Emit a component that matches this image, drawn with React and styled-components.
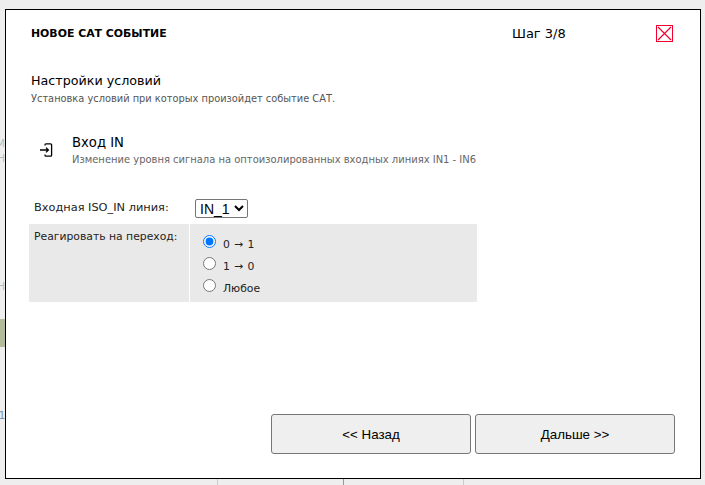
import React from "react";
import styled, { createGlobalStyle } from "styled-components";

const GlobalStyle = createGlobalStyle`
  html, body {
    margin: 0;
    padding: 0;
    background: #eeeeee;
  }
  body {
    font-family: "DejaVu Sans", Verdana, sans-serif;
    color: #000;
  }
`;

const Page = styled.div`
  position: relative;
  width: 705px;
  height: 485px;
  overflow: hidden;
  background: #eeeeee;
  padding: 9px 4px 6px 5px;
  box-sizing: border-box;
`;

// bits of the page behind the dialog
const BehindStrip = styled.div`
  position: absolute;
  left: 0;
  top: 319px;
  width: 5px;
  height: 28px;
  background: #b3bb9d;
`;

const BehindLine = styled.div`
  position: absolute;
  top: 479px;
  left: ${(p) => p.$left}px;
  width: 1px;
  height: 6px;
  background: ${(p) => p.$color};
`;

const BehindText = styled.div`
  position: absolute;
  left: 0;
  top: ${(p) => p.$top}px;
  width: 5px;
  overflow: hidden;
  direction: rtl;
  font-size: 10px;
  line-height: 12px;
  color: ${(p) => p.$color};
`;

const Modal = styled.div`
  position: relative;
  height: 100%;
  box-sizing: border-box;
  border: 1px solid #000;
  background: #fff;
  padding: 16px 25px 0 25px;
  display: flex;
  flex-direction: column;
`;

const Header = styled.div`
  display: flex;
  align-items: center;
  height: 14px;
`;

const Title = styled.div`
  font-size: 10.9px;
  font-weight: 700;
  width: 481px;
`;

const Step = styled.div`
  font-size: 13px;
  width: 144px;
`;

const CloseButton = styled.button`
  width: 17px;
  height: 17px;
  padding: 0;
  border: 1px solid #f4002c;
  background: #fff;
  display: block;
`;

const SectionTitle = styled.div`
  font-size: 12.7px;
  line-height: 16px;
  margin-top: 33px;
`;

const SectionHint = styled.div`
  font-size: 9.83px;
  line-height: 12px;
  margin-top: 4px;
  color: #555;
`;

const EventRow = styled.div`
  display: flex;
  margin-top: 30px;
  padding-left: 8px;
`;

const EventIcon = styled.div`
  width: 33px;
  padding-top: 7px;
`;

const EventTitle = styled.div`
  font-size: 13.2px;
  line-height: 16px;
`;

const EventHint = styled.div`
  font-size: 9.96px;
  line-height: 12px;
  margin-top: 3px;
  color: #666;
`;

const Form = styled.div`
  width: 448px;
  margin: 29px 0 0 -2px;
`;

const SelectRow = styled.div`
  display: flex;
  height: 29px;
`;

const Label = styled.div`
  width: 161px;
  box-sizing: border-box;
  padding: 5px 0 0 5px;
  font-size: 11.35px;
  line-height: 14px;
  color: #222;
`;

const LineSelect = styled.select`
  font-family: "Liberation Sans", Arial, sans-serif;
  font-size: 14px;
  width: 53px;
  height: 19px;
  padding: 0;
  align-self: flex-start;
  margin: 4px 0 0 5px;
  border: 1px solid #767676;
  border-radius: 2px;
  background: #fff;
`;

const ReactRow = styled.div`
  display: flex;
  height: 78px;
  background: #e9e9e9;
`;

const ReactLabel = styled(Label)`
  font-size: 10.8px;
  padding-top: 6px;
  border-right: 1px solid #fff;
`;

const Options = styled.div`
  padding-top: 11px;
  display: flex;
  flex-direction: column;
  gap: 9px;
`;

const Option = styled.label`
  display: flex;
  align-items: center;
  height: 13px;
  font-size: 10.8px;
  color: #222;
`;

const OptionText = styled.span`
  padding-top: 6px;
  word-spacing: 0.8px;
`;

const Radio = styled.input`
  width: 13px;
  height: 13px;
  margin: 0 7px 0 13px;
`;

const Footer = styled.div`
  margin-top: auto;
  margin-bottom: 24px;
  display: flex;
  justify-content: flex-end;
  gap: 4px;
`;

const NavButton = styled.button`
  width: 200px;
  height: 40px;
  border: 1px solid #767676;
  border-radius: 3px;
  background: #efefef;
  font-family: "Liberation Sans", Arial, sans-serif;
  font-size: 13.33px;
  color: #000;
  padding: 0;
`;

const InputIcon = () => (
  <svg width="16" height="16" viewBox="0 0 16 16" fill="none" stroke="#000" strokeWidth="1.3">
    <path d="M6 3.5V2.8a1 1 0 0 1 1-1h4.6a1 1 0 0 1 1 1v10.4a1 1 0 0 1-1 1H7a1 1 0 0 1-1-1v-.7" />
    <path d="M1 8h8.2M7 5.6 9.4 8 7 10.4" />
  </svg>
);

const CloseIcon = () => (
  <svg width="15" height="15" viewBox="0 0 15 15" style={{ display: "block" }}>
    <path d="M1 1 14 14M14 1 1 14" stroke="#f4002c" strokeWidth="1.2" />
  </svg>
);

const App = () => {
  return (
    <Page>
      <GlobalStyle />
      <BehindText $top={138} $color="#bbb">М</BehindText>
      <BehindText $top={153} $color="#bbb">Н</BehindText>
      <BehindText $top={281} $color="#bbb">Н</BehindText>
      <BehindText $top={410} $color="#6f93b5">1</BehindText>
      <BehindStrip />
      <BehindLine $left={343} $color="#999" />
      <BehindLine $left={463} $color="#ccc" />
      <BehindLine $left={217} $color="#ccc" />
      <Modal>
        <Header>
          <Title>НОВОЕ САТ СОБЫТИЕ</Title>
          <Step>Шаг 3/8</Step>
          <CloseButton aria-label="Закрыть">
            <CloseIcon />
          </CloseButton>
        </Header>

        <SectionTitle>Настройки условий</SectionTitle>
        <SectionHint>Установка условий при которых произойдет событие САТ.</SectionHint>

        <EventRow>
          <EventIcon>
            <InputIcon />
          </EventIcon>
          <div>
            <EventTitle>Вход IN</EventTitle>
            <EventHint>Изменение уровня сигнала на оптоизолированных входных линиях IN1 - IN6</EventHint>
          </div>
        </EventRow>

        <Form>
          <SelectRow>
            <Label>Входная ISO_IN линия:</Label>
            <LineSelect defaultValue="IN_1">
              <option>IN_1</option>
              <option>IN_2</option>
            </LineSelect>
          </SelectRow>
          <ReactRow>
            <ReactLabel>Реагировать на переход:</ReactLabel>
            <Options>
              <Option>
                <Radio type="radio" name="edge" defaultChecked />
                <OptionText>0 → 1</OptionText>
              </Option>
              <Option>
                <Radio type="radio" name="edge" />
                <OptionText>1 → 0</OptionText>
              </Option>
              <Option>
                <Radio type="radio" name="edge" />
                <OptionText>Любое</OptionText>
              </Option>
            </Options>
          </ReactRow>
        </Form>

        <Footer>
          <NavButton>{"<< Назад"}</NavButton>
          <NavButton>{"Дальше >>"}</NavButton>
        </Footer>
      </Modal>
    </Page>
  );
};

export default App;
